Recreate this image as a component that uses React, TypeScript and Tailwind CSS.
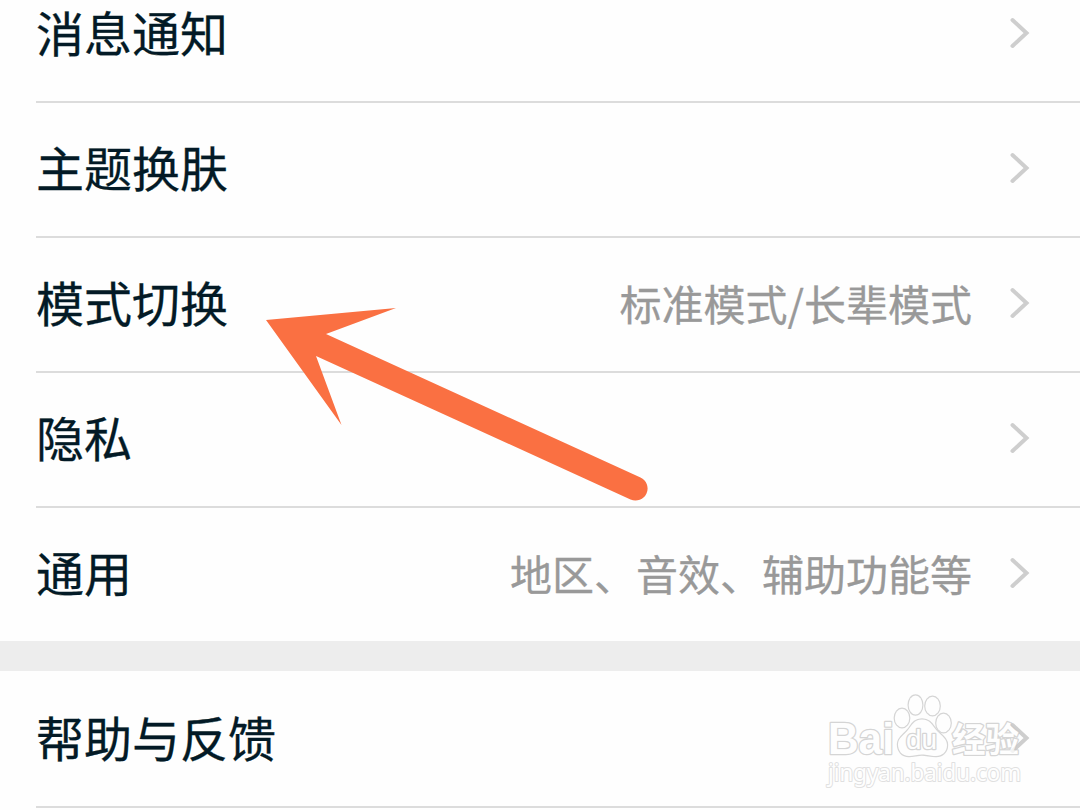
type Item = { label: string; detail?: string };

const mainItems: Item[] = [
  { label: "消息通知" },
  { label: "主题换肤" },
  { label: "模式切换", detail: "标准模式/长辈模式" },
  { label: "隐私" },
  { label: "通用", detail: "地区、音效、辅助功能等" },
];

const helpItems: Item[] = [{ label: "帮助与反馈" }];

function Chevron() {
  return (
    <svg
      width="24"
      height="36"
      viewBox="0 0 24 36"
      className="shrink-0 -mt-[3px]"
      fill="none"
      stroke="#cecece"
      strokeWidth="4"
      strokeLinecap="round"
      strokeLinejoin="miter"
    >
      <path d="M4.5 5L18.5 18L4.5 31" />
    </svg>
  );
}

function Row({ item, last }: { item: Item; last?: boolean }) {
  return (
    <li
      className={
        last
          ? "ml-9 flex h-[133px] items-center pr-12"
          : "ml-9 flex h-[135px] items-center border-b-2 border-[#dcdcdc] pr-12"
      }
    >
      <span className="flex-1 pb-2 text-[48px] leading-none text-[#031a26] [-webkit-text-stroke:0.3px_#031a26]">
        {item.label}
      </span>
      {item.detail && (
        <span className="mr-9 pb-[3px] text-[42px] leading-none text-[#999999] [-webkit-text-stroke:0.3px_#999999]">
          {item.detail}
        </span>
      )}
      <Chevron />
    </li>
  );
}

function Arrow() {
  return (
    <svg
      className="absolute left-[260px] top-[300px]"
      width="400"
      height="210"
      viewBox="260 300 400 210"
      fill="#fa7042"
    >
      <path d="M266 320L396 308L326 334L640.5 477.5A12 12 0 0 1 630.5 499.5L316 356L341.5 425Z" />
    </svg>
  );
}

function Watermark() {
  return (
    <svg
      className="absolute left-[820px] top-[685px] opacity-75"
      width="215"
      height="110"
      viewBox="820 685 215 110"
      fill="#ffffff"
      stroke="#c8c8c8"
      strokeWidth="2.6"
      strokeLinejoin="round"
      paintOrder="stroke"
      fontFamily='"Liberation Sans", "Noto Sans CJK SC", sans-serif'
    >
      <text x="828" y="754" fontSize="44" fontWeight="700" textLength="66" lengthAdjust="spacingAndGlyphs">
        Bai
      </text>
      <g strokeWidth="2.4">
        <ellipse cx="902" cy="718" rx="7.2" ry="9.2" />
        <ellipse cx="915.5" cy="705" rx="6.8" ry="9.5" />
        <ellipse cx="932.5" cy="706" rx="7.2" ry="9.2" />
        <ellipse cx="943.5" cy="723" rx="7.2" ry="9.2" />
        <path d="M922 719.5C930 719.5 932 725 937 731C942 736 947 739 947 745C947 752 942 756 936 756C930 756 927 754.5 922 754.5C917 754.5 914 756 909 756C902 756 898 751 898 744C898 738 904 735 908 730C912 725 914 719.5 922 719.5Z" />
      </g>
      <text x="906" y="749" fontSize="27" textLength="31" lengthAdjust="spacingAndGlyphs">
        du
      </text>
      <text
        x="952"
        y="752"
        fontSize="34"
        fontWeight="700"
        fontFamily='"Noto Sans CJK SC", sans-serif'
        textLength="67"
        lengthAdjust="spacingAndGlyphs"
      >
        经验
      </text>
      <text
        x="828"
        y="781"
        fontSize="23"
        fontFamily='"Noto Sans", sans-serif'
        strokeWidth="2"
        stroke="#d6d6d6"
        textLength="193"
        lengthAdjust="spacingAndGlyphs"
      >
        jingyan.baidu.com
      </text>
    </svg>
  );
}

export default function App() {
  return (
    <div className="relative h-[810px] w-full overflow-hidden bg-[#fefefe] font-['Noto_Sans_CJK_SC',sans-serif]">
      <ul className="-mt-8">
        {mainItems.map((item, i) => (
          <Row key={item.label} item={item} last={i === mainItems.length - 1} />
        ))}
      </ul>
      <div className="h-[30px] bg-[#ededed]" />
      <ul className="pt-0.5">
        {helpItems.map((item) => (
          <Row key={item.label} item={item} />
        ))}
      </ul>
      <Arrow />
      <Watermark />
    </div>
  );
}
